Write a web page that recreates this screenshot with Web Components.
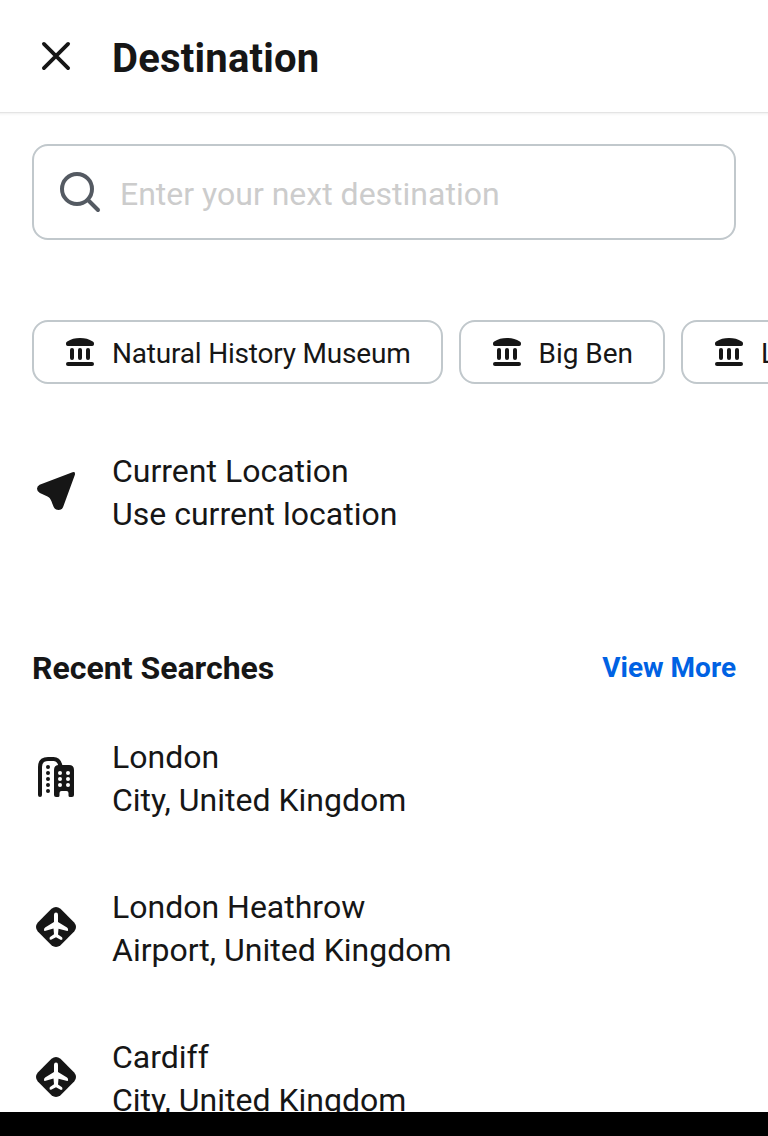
<!DOCTYPE html>
<html lang="en">
<head>
<meta charset="utf-8">
<title>Destination</title>
<style>
html,body{margin:0;height:100%;background:#000}
body{font-family:Roboto,"Liberation Sans",sans-serif;color:#161616}
</style>
</head>
<body>
<destination-page></destination-page>
<script>
const icons = {
  close: '<path d="M11.9 11.9 36.1 36.1M36.1 11.9 11.9 36.1" fill="none" stroke="currentColor" stroke-width="3.8" stroke-linecap="round"/>',
  search: '<circle cx="21" cy="21" r="15" fill="none" stroke="currentColor" stroke-width="4"/><path d="M32 32 42 42" fill="none" stroke="currentColor" stroke-width="4" stroke-linecap="round"/>',
  museum: '<g transform="scale(1.5)"><path d="M2 8.200V7.400Q2 6.200 3.200 5.500C7 3 11 2 16 2s9 1 12.800 3.500Q30 6.200 30 7.400v.8Q30 10 28.200 10H3.800Q2 10 2 8.200Z"/><rect x="6" y="12" width="4" height="12" rx="2"/><rect x="14" y="12" width="4" height="12" rx="2"/><rect x="22" y="12" width="4" height="12" rx="2"/><rect x="2" y="26" width="28" height="4" rx="2"/></g>',
  arrow: '<path d="M7.600 17.800 40.500 5.200Q43.600 4.400 43 7.500L31.300 39.500Q30.200 43 26.600 43T21.700 40C19.500 35 19 31.200 15.500 29.600L7.900 26Q5 24.500 5 21.800T7.600 17.800Z"/>',
  city: '<path d="M8 42V14Q8 6 16 6h5.500Q27 6 28.500 13" fill="none" stroke="currentColor" stroke-width="4" stroke-linecap="round"/><circle cx="16" cy="14" r="2"/><circle cx="16" cy="20" r="2"/><circle cx="16" cy="26" r="2"/><circle cx="16" cy="32" r="2"/><circle cx="16" cy="38" r="2"/><path d="M27 12h10q5 0 5 5v25q0 2-2 2h-2q-1.500 0-1.500-1.500V40q0-2-2-2h-5q-2 0-2 2v2.500Q27.500 44 26 44h-2q-2 0-2-2V17q0-5 5-5Z"/><g fill="#fff"><circle cx="28" cy="20" r="2"/><circle cx="36" cy="20" r="2"/><circle cx="28" cy="26" r="2"/><circle cx="36" cy="26" r="2"/><circle cx="28" cy="32" r="2"/><circle cx="36" cy="32" r="2"/></g>',
  airport: '<path d="M19.500 5.800Q24 2.200 28.500 5.800L42.200 19.500Q45.800 24 42.200 28.500L28.500 42.200Q24 45.800 19.500 42.200L5.800 28.500Q2.200 24 5.800 19.500Z"/><path fill="#fff" d="M22 11.800Q22 9.600 24 9.600t2 2.200v7.200l9 5.400q1.400 1 1.100 3.200l-.8.400-8.800-2.200-.5 5.600 4 2.800q.7.700.3 2.400l-1.300.4L24 34.300l-5 2.500-1.300-.4q-.4-1.700.3-2.400l4-2.800-.5-5.600L12.800 28l-.8-.4q-.3-2.200 1.100-3.200l8.900-5.400Z"/>'
};
class UiIcon extends HTMLElement {
  connectedCallback() {
    this.attachShadow({mode: 'open'}).innerHTML = `<style>:host{display:block;flex:none;width:48px;height:48px}svg{display:block;width:100%;height:100%;fill:currentColor}</style><svg viewBox="0 0 48 48" aria-hidden="true">${icons[this.getAttribute('name')]}</svg>`;
  }
}
function define(name, markup) {
  const template = document.createElement('template');
  template.innerHTML = markup;
  customElements.define(name, class extends HTMLElement {
    constructor() {
      super();
      this.attachShadow({mode: 'open'}).append(template.content.cloneNode(true));
    }
  });
}
customElements.define('ui-icon', UiIcon);
define('page-header', `<style>
:host{display:flex;flex:none;box-sizing:border-box;height:112px;padding:32px;gap:32px;background:#fff;box-shadow:0 1px 0 #e4e4e4,0 2px 0 #f4f4f4,0 3px 0 #fafafa,0 4px 0 #fdfdfd}
h1{margin:0;font-size:40px;line-height:54px;font-weight:700;letter-spacing:.2px;white-space:nowrap}
</style><ui-icon name="close"></ui-icon><h1><slot></slot></h1>`);
define('search-field', `<style>
:host{display:flex;align-items:center;box-sizing:border-box;height:96px;border:2px solid #c1c8cc;border-radius:16px;padding:0 22px;gap:16px;color:#ccc;font-size:32px;line-height:44px}
ui-icon{color:#545a62}span{padding-top:4px}
</style><ui-icon name="search"></ui-icon><span><slot></slot></span>`);
define('place-chip', `<style>
:host{display:flex;flex:none;align-items:center;box-sizing:border-box;height:64px;border:2px solid #c1c8cc;border-radius:16px;padding:0 30px;gap:16px;font-size:28px;line-height:40px;letter-spacing:var(--chip-tracking,-.2px);white-space:nowrap}
ui-icon{width:32px;height:32px}span{padding-top:4px}
</style><ui-icon name="museum"></ui-icon><span><slot></slot></span>`);
customElements.define('place-item', class extends HTMLElement {
  constructor() {
    super();
    this.attachShadow({mode: 'open'}).innerHTML = `<style>
:host{display:flex;align-items:center;gap:32px;height:86px;font-size:32px;line-height:43px;white-space:nowrap}
.text{padding-top:4px}
</style><ui-icon name="${this.getAttribute('icon')}"></ui-icon><div class="text"><div><slot name="title"></slot></div><div><slot></slot></div></div>`;
  }
});
define('section-heading', `<style>
:host{display:flex;justify-content:space-between;align-items:center;height:44px}
h2{margin:0;font-size:32px;line-height:44px;font-weight:700}
.link{font-size:28px;line-height:40px;font-weight:700;color:#0062e3}
</style><h2><slot></slot></h2><span class="link"><slot name="action"></slot></span>`);
define('destination-page', `<style>
:host{display:flex;flex-direction:column;height:1112px;overflow:hidden;background:#fff}
main{padding:32px 32px 0}
.chips{display:flex;gap:16px;margin:80px -32px 0 0;overflow:hidden}
.short{--chip-tracking:-.04px}
.current{margin-top:64px}
section-heading{margin-top:112px}
.recent{display:grid;gap:64px;margin-top:44px}
</style>
<page-header>Destination</page-header>
<main>
<search-field>Enter your next destination</search-field>
<div class="chips"><place-chip>Natural History Museum</place-chip><place-chip class="short">Big Ben</place-chip><place-chip>London Eye</place-chip></div>
<place-item class="current" icon="arrow"><span slot="title">Current Location</span>Use current location</place-item>
<section-heading>Recent Searches<span slot="action">View More</span></section-heading>
<div class="recent">
<place-item icon="city"><span slot="title">London</span>City, United Kingdom</place-item>
<place-item icon="airport"><span slot="title">London Heathrow</span>Airport, United Kingdom</place-item>
<place-item icon="airport"><span slot="title">Cardiff</span>City, United Kingdom</place-item>
</div>
</main>`);
</script>
</body>
</html>
